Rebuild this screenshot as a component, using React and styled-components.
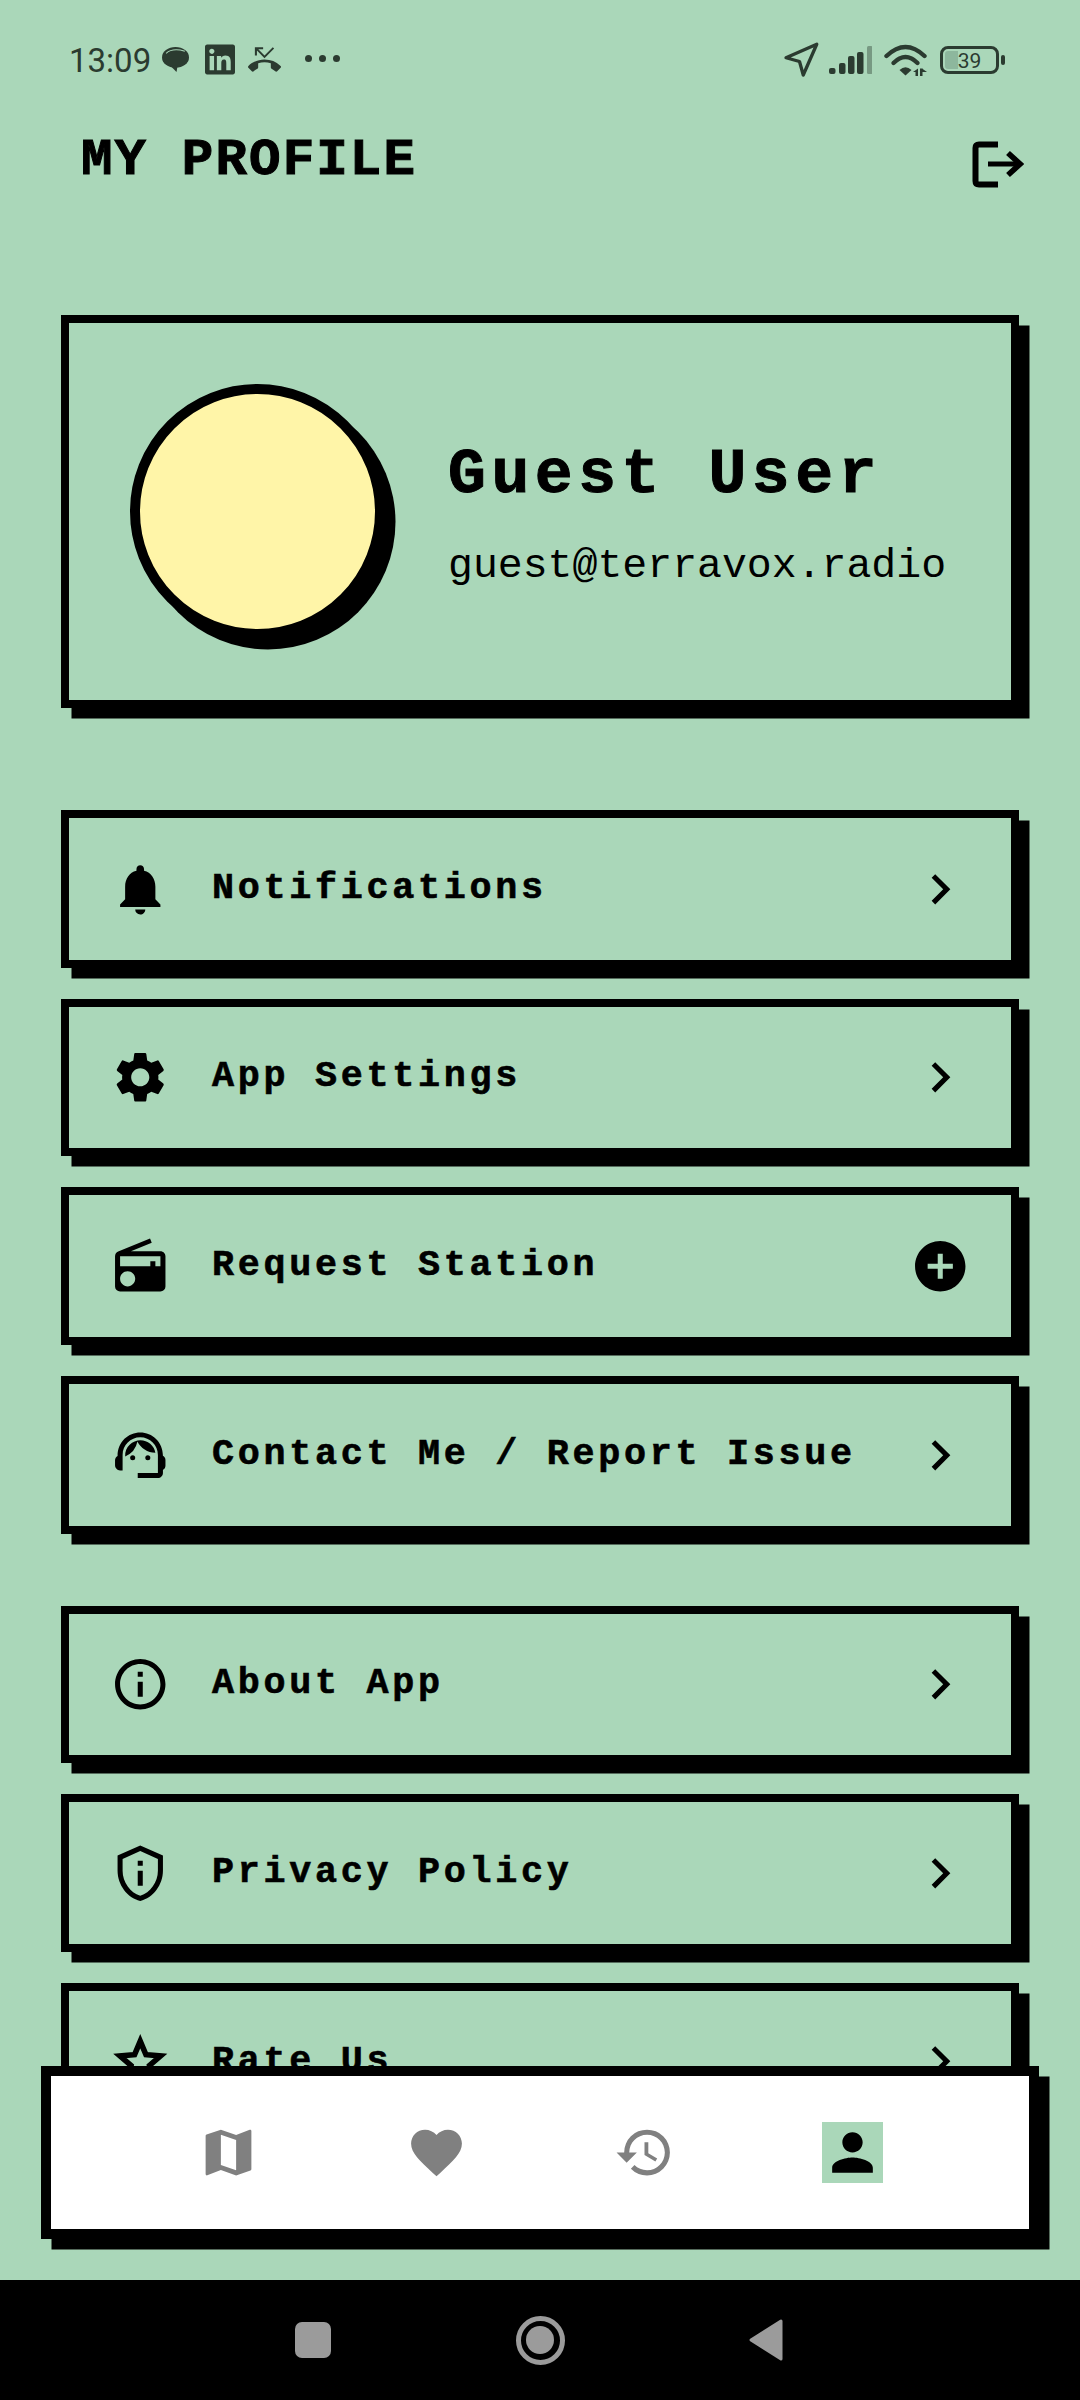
import React from "react";
import styled, { createGlobalStyle } from "styled-components";
import {
  MdNotifications,
  MdSettings,
  MdRadio,
  MdSupportAgent,
  MdInfoOutline,
  MdOutlinePrivacyTip,
  MdStarBorder,
  MdChevronRight,
  MdAddCircle,
  MdMap,
  MdFavorite,
  MdHistory,
  MdPerson,
  MdPhoneMissed,
} from "react-icons/md";
import { FaLinkedin } from "react-icons/fa";

const GREEN = "#aad7b9";
const STATUS = "#2b3b30";
const MONO = `"Liberation Mono", "Courier New", monospace`;

const GlobalStyle = createGlobalStyle`
  html, body {
    margin: 0;
    padding: 0;
    background: ${GREEN};
  }
`;

const mainRows = [
  { label: "Notifications", icon: MdNotifications },
  { label: "App Settings", icon: MdSettings },
  { label: "Request Station", icon: MdRadio, add: true },
  { label: "Contact Me / Report Issue", icon: MdSupportAgent },
];

const infoRows = [
  { label: "About App", icon: MdInfoOutline },
  { label: "Privacy Policy", icon: MdOutlinePrivacyTip },
  { label: "Rate Us", icon: MdStarBorder, heavy: true },
];

const Row = ({ label, icon: Icon, add, heavy }) => (
  <RowCard>
    <RowIcon as={Icon} $heavy={heavy} />
    <RowLabel>{label}</RowLabel>
    {add ? <RowIcon as={MdAddCircle} /> : <RowIcon as={MdChevronRight} />}
  </RowCard>
);

const App = () => {
  return (
    <Screen>
      <GlobalStyle />
      <Main>
        <StatusBar>
          <StatusGroup>
            <Time>13:09</Time>
            <Bubble viewBox="0 0 26 25">
              <ellipse cx="13" cy="11" rx="13" ry="10" fill={STATUS} />
              <polygon points="8,19 14,25 15,19" fill={STATUS} />
              <path d="M4 7 Q10 1.6 22 5" fill="none" stroke={GREEN} strokeWidth="1" />
            </Bubble>
            <LinkedIn />
            <Missed />
            <Dots>
              <Dot />
              <Dot />
              <Dot />
            </Dots>
          </StatusGroup>
          <StatusGroup>
            <Arrow viewBox="0 0 24 24">
              <polygon
                points="2,10.5 22.5,1.5 13.5,22 11,13"
                fill="none"
                stroke={STATUS}
                strokeWidth="2.2"
                strokeLinejoin="round"
              />
            </Arrow>
            <Signal viewBox="0 0 43 28">
              <rect x="0" y="22" width="6.5" height="6" rx="2" fill={STATUS} />
              <rect x="10" y="17" width="6.5" height="11" rx="2" fill={STATUS} />
              <rect x="19" y="10" width="6.5" height="18" rx="2" fill={STATUS} />
              <rect x="28" y="6" width="6.5" height="22" rx="2" fill={STATUS} />
              <rect x="38" y="0" width="5.5" height="28" rx="1.5" fill={STATUS} opacity="0.4" />
            </Signal>
            <Wifi viewBox="0 0 43 32">
              <path d="M2.5 12 Q21.5 -6 40.5 12" fill="none" stroke={STATUS} strokeWidth="4.4" strokeLinecap="round" />
              <path d="M9.5 19 Q21.5 7 33.5 19" fill="none" stroke={STATUS} strokeWidth="4.4" strokeLinecap="round" />
              <path d="M15.5 26 Q21.5 20.5 27.5 26 L21.5 31.5 Z" fill={STATUS} />
              <polygon points="34,28 29,28 34,24.5" fill={STATUS} />
              <rect x="31.5" y="27.5" width="2.5" height="4.5" fill={STATUS} />
              <rect x="36" y="24.5" width="2.5" height="7.5" fill={STATUS} />
              <polygon points="38,24.5 43,28 38,28" fill={STATUS} />
            </Wifi>
            <Battery>39</Battery>
            <BatteryNib />
          </StatusGroup>
        </StatusBar>

        <Header>
          <Title>MY PROFILE</Title>
          <LogoutIcon viewBox="0 0 52 47">
            <path
              d="M26 3.5 H7 Q3.5 3.5 3.5 7 V40 Q3.5 43.5 7 43.5 H26"
              fill="none"
              stroke="#000"
              strokeWidth="6"
            />
            <path d="M16 23 H47" fill="none" stroke="#000" strokeWidth="5" />
            <path d="M36 12 L48 23 L36 34" fill="none" stroke="#000" strokeWidth="5.6" />
          </LogoutIcon>
        </Header>

        <Content>
          <ProfileCard>
            <Avatar />
            <ProfileText>
              <Name>Guest User</Name>
              <Email>guest@terravox.radio</Email>
            </ProfileText>
          </ProfileCard>

          <RowGroup>
            {mainRows.map((row) => (
              <Row key={row.label} {...row} />
            ))}
          </RowGroup>

          <SecondGroup>
            {infoRows.map((row) => (
              <Row key={row.label} {...row} />
            ))}
          </SecondGroup>
        </Content>

        <BottomNav>
          <NavIcon as={MdMap} />
          <NavIcon as={MdFavorite} />
          <NavIcon as={MdHistory} />
          <NavIcon as={MdPerson} $active />
        </BottomNav>
      </Main>

      <SystemBar>
        <SquareKey />
        <HomeKey>
          <HomeDot />
        </HomeKey>
        <BackKey viewBox="0 0 34 42">
          <polygon
            points="2,21 32,2 32,40"
            fill="#9b9b9b"
            stroke="#9b9b9b"
            strokeWidth="3"
            strokeLinejoin="round"
          />
        </BackKey>
      </SystemBar>
    </Screen>
  );
};

const Screen = styled.div`
  width: 1080px;
  height: 2400px;
  display: flex;
  flex-direction: column;
  overflow: hidden;
  background: ${GREEN};
`;

const Main = styled.main`
  position: relative;
  flex: 1;
  min-height: 0;
  overflow: hidden;
`;

const StatusBar = styled.div`
  display: flex;
  align-items: center;
  justify-content: space-between;
  height: 34px;
  padding: 43px 75px 35px 69px;
`;

const StatusGroup = styled.div`
  display: flex;
  align-items: center;
`;

const Time = styled.span`
  font-family: Roboto, sans-serif;
  font-size: 33px;
  color: ${STATUS};
`;

const Bubble = styled.svg`
  width: 27px;
  height: 26px;
  margin: -2px 0 0 11px;
`;

const LinkedIn = styled(FaLinkedin)`
  width: 30px;
  height: 35px;
  margin: -2px 0 0 16px;
  color: ${STATUS};
`;

const Missed = styled(MdPhoneMissed)`
  width: 33px;
  height: 33px;
  margin: -2px 0 0 13px;
  color: ${STATUS};
`;

const Dots = styled.div`
  display: flex;
  gap: 7px;
  margin: -3px 0 0 24px;
`;

const Dot = styled.span`
  width: 7px;
  height: 7px;
  border-radius: 50%;
  background: ${STATUS};
`;

const Arrow = styled.svg`
  width: 36px;
  height: 36px;
`;

const Signal = styled.svg`
  width: 43px;
  height: 28px;
  margin-left: 10px;
`;

const Wifi = styled.svg`
  width: 43px;
  height: 32px;
  margin-left: 12px;
`;

const Battery = styled.div`
  box-sizing: border-box;
  width: 59px;
  height: 28px;
  margin-left: 13px;
  border: 3px solid ${STATUS};
  border-radius: 8px;
  background: linear-gradient(to right, #8db79d 0 15px, transparent 15px);
  background-clip: content-box;
  padding: 2px;
  font-family: Roboto, sans-serif;
  font-size: 21px;
  line-height: 20px;
  text-align: center;
  color: ${STATUS};
`;

const BatteryNib = styled.span`
  width: 4px;
  height: 10px;
  margin-left: 2px;
  border-radius: 2px;
  background: ${STATUS};
`;

const Header = styled.header`
  display: flex;
  align-items: center;
  justify-content: space-between;
  height: 100px;
  padding: 0 56px 0 81px;
`;

const Title = styled.h1`
  margin: 0 0 4px;
  font-family: ${MONO};
  font-size: 52.5px;
  font-weight: 700;
  letter-spacing: 2.1px;
  color: #000;
  -webkit-text-stroke: 1px #000;
`;

const LogoutIcon = styled.svg`
  width: 52px;
  height: 47px;
  margin-top: 4px;
`;

const Content = styled.div`
  padding: 103px 61px 0;
`;

const ProfileCard = styled.section`
  box-sizing: border-box;
  display: flex;
  align-items: center;
  gap: 63px;
  height: 393px;
  padding-left: 61px;
  border: 8px solid #000;
  box-shadow: 10.5px 10.5px 0 #000;
`;

const Avatar = styled.div`
  box-sizing: border-box;
  flex: none;
  width: 255px;
  height: 255px;
  border: 10.5px solid #000;
  border-radius: 50%;
  background: #fff5a8;
  box-shadow: 10.5px 10.5px 0 #000;
`;

const ProfileText = styled.div`
  display: flex;
  flex-direction: column;
  gap: 30px;
  margin-top: 6px;
`;

const Name = styled.h2`
  margin: 0;
  font-family: ${MONO};
  font-size: 63px;
  font-weight: 700;
  letter-spacing: 5.6px;
  line-height: 72px;
  color: #000;
  -webkit-text-stroke: 1px #000;
`;

const Email = styled.p`
  margin: 0;
  font-family: ${MONO};
  font-size: 41.5px;
  line-height: 48px;
  color: #000;
`;

const RowGroup = styled.div`
  display: flex;
  flex-direction: column;
  gap: 31.2px;
  margin-top: 102px;
`;

const SecondGroup = styled(RowGroup)`
  margin-top: 72px;
`;

const RowCard = styled.div`
  box-sizing: border-box;
  display: flex;
  align-items: center;
  gap: 41.5px;
  height: 157.5px;
  padding: 0 41px;
  border: 8px solid #000;
  box-shadow: 10.5px 10.5px 0 #000;
`;

const RowIcon = styled.svg`
  flex: none;
  width: 60.5px;
  height: 60.5px;
  color: #000;

  path:last-child {
    stroke-width: ${(props) => (props.$heavy ? "0.6px" : "0")};
  }
`;

const RowLabel = styled.span`
  flex: 1;
  margin-top: -2px;
  font-family: ${MONO};
  font-size: 36.75px;
  font-weight: 700;
  letter-spacing: 3.7px;
  color: #000;
  -webkit-text-stroke: 0.6px #000;
`;

const BottomNav = styled.nav`
  position: absolute;
  left: 41px;
  bottom: 41px;
  box-sizing: border-box;
  display: flex;
  align-items: center;
  justify-content: center;
  gap: 147px;
  width: 998px;
  height: 173px;
  border: 10.5px solid #000;
  background: #fff;
  box-shadow: 10.5px 10.5px 0 #000;
`;

const NavIcon = styled.svg`
  width: 61px;
  height: 61px;
  color: ${(props) => (props.$active ? "#000" : "#808080")};
  background: ${(props) => (props.$active ? GREEN : "transparent")};
`;

const SystemBar = styled.div`
  flex: none;
  display: flex;
  align-items: center;
  justify-content: center;
  gap: 184.5px;
  height: 120px;
  padding-right: 2px;
  background: #000;
`;

const SquareKey = styled.span`
  width: 36.5px;
  height: 36.5px;
  border-radius: 7px;
  background: #9b9b9b;
`;

const HomeKey = styled.span`
  box-sizing: border-box;
  display: flex;
  align-items: center;
  justify-content: center;
  width: 49px;
  height: 49px;
  border: 5px solid #9b9b9b;
  border-radius: 50%;
`;

const HomeDot = styled.span`
  width: 28px;
  height: 28px;
  border-radius: 50%;
  background: #9b9b9b;
`;

const BackKey = styled.svg`
  width: 34px;
  height: 42px;
`;

export default App;
